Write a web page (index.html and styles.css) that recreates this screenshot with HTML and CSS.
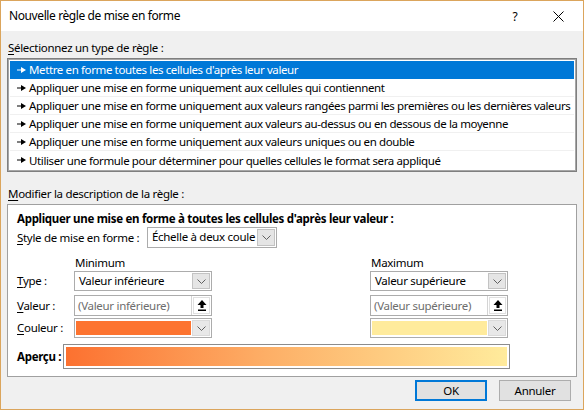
FILE: index.html
```html
<!DOCTYPE html>
<html lang="fr">
<head>
<meta charset="utf-8">
<title>Nouvelle règle de mise en forme</title>
<link rel="stylesheet" href="styles.css">
</head>
<body>
<div class="window">
  <div class="titlebar">
    <div class="title">Nouvelle règle de mise en forme</div>
    <div class="tb-help">?</div>
    <div class="tb-close"><svg width="11" height="11" viewBox="0 0 11 11"><path d="M0.5 0.5L10.5 10.5M10.5 0.5L0.5 10.5" stroke="#000" stroke-width="1"/></svg></div>
  </div>
  <div class="content">
    <div class="label"><u>S</u>électionnez un type de règle :</div>
    <div class="list">
      <div class="row selected"><svg class="arr" viewBox="0 0 9 6"><path d="M0 2.5h4.5v1H0z M4 0L9 3L4 6z" fill="currentColor"/></svg><span>Mettre en forme toutes les cellules d'après leur valeur</span></div>
      <div class="row"><svg class="arr" viewBox="0 0 9 6"><path d="M0 2.5h4.5v1H0z M4 0L9 3L4 6z" fill="currentColor"/></svg><span>Appliquer une mise en forme uniquement aux cellules qui contiennent</span></div>
      <div class="row"><svg class="arr" viewBox="0 0 9 6"><path d="M0 2.5h4.5v1H0z M4 0L9 3L4 6z" fill="currentColor"/></svg><span>Appliquer une mise en forme uniquement aux valeurs rangées parmi les premières ou les dernières valeurs</span></div>
      <div class="row"><svg class="arr" viewBox="0 0 9 6"><path d="M0 2.5h4.5v1H0z M4 0L9 3L4 6z" fill="currentColor"/></svg><span>Appliquer une mise en forme uniquement aux valeurs au-dessus ou en dessous de la moyenne</span></div>
      <div class="row"><svg class="arr" viewBox="0 0 9 6"><path d="M0 2.5h4.5v1H0z M4 0L9 3L4 6z" fill="currentColor"/></svg><span>Appliquer une mise en forme uniquement aux valeurs uniques ou en double</span></div>
      <div class="row last"><svg class="arr" viewBox="0 0 9 6"><path d="M0 2.5h4.5v1H0z M4 0L9 3L4 6z" fill="currentColor"/></svg><span>Utiliser une formule pour déterminer pour quelles cellules le format sera appliqué</span></div>
    </div>
    <div class="label label2"><u>M</u>odifier la description de la règle :</div>
    <div class="panel">
      <div class="heading">Appliquer une mise en forme à toutes les cellules d'après leur valeur :</div>
      <div class="style-row">
        <div class="style-label"><u>S</u>tyle de mise en forme :</div>
        <div class="combo style-combo">
          <span class="combo-text">Échelle à deux coule</span>
          <span class="dd"><svg width="9" height="5" viewBox="0 0 9 5"><path d="M0.5 0.5L4.5 4.5L8.5 0.5" stroke="#606060" fill="none"/></svg></span>
        </div>
      </div>
      <div class="grid">
        <div></div>
        <div class="colhead">Minimum</div>
        <div></div>
        <div class="colhead">Maximum</div>

        <div class="rlabel h20"><u>T</u>ype :</div>
        <div class="combo h20"><span class="combo-text">Valeur inférieure</span><span class="dd"><svg width="9" height="5" viewBox="0 0 9 5"><path d="M0.5 0.5L4.5 4.5L8.5 0.5" stroke="#606060" fill="none"/></svg></span></div>
        <div></div>
        <div class="combo h20"><span class="combo-text">Valeur supérieure</span><span class="dd"><svg width="9" height="5" viewBox="0 0 9 5"><path d="M0.5 0.5L4.5 4.5L8.5 0.5" stroke="#606060" fill="none"/></svg></span></div>

        <div class="rlabel h21"><u>V</u>aleur :</div>
        <div class="input h21"><span class="ph">(Valeur inférieure)</span><span class="pick"><svg width="10" height="11" viewBox="0 0 10 11"><path d="M5 0L9.5 5H6.5V8H3.5V5H0.5Z" fill="#000"/><rect x="1" y="9.5" width="8" height="1.5" fill="#000"/></svg></span></div>
        <div></div>
        <div class="input h21"><span class="ph">(Valeur supérieure)</span><span class="pick"><svg width="10" height="11" viewBox="0 0 10 11"><path d="M5 0L9.5 5H6.5V8H3.5V5H0.5Z" fill="#000"/><rect x="1" y="9.5" width="8" height="1.5" fill="#000"/></svg></span></div>

        <div class="rlabel h20"><u>C</u>ouleur :</div>
        <div class="combo color h20"><span class="swatch orange"></span><span class="dd"><svg width="9" height="5" viewBox="0 0 9 5"><path d="M0.5 0.5L4.5 4.5L8.5 0.5" stroke="#606060" fill="none"/></svg></span></div>
        <div></div>
        <div class="combo color h20"><span class="swatch yellow"></span><span class="dd"><svg width="9" height="5" viewBox="0 0 9 5"><path d="M0.5 0.5L4.5 4.5L8.5 0.5" stroke="#606060" fill="none"/></svg></span></div>
      </div>
      <div class="preview-row">
        <div class="preview-label">Aperçu :</div>
        <div class="preview"><div class="gradient"></div></div>
      </div>
    </div>
    <div class="buttons">
      <div class="btn default">OK</div>
      <div class="btn">Annuler</div>
    </div>
  </div>
</div>
</body>
</html>
```

FILE: styles.css
```css
* { box-sizing: border-box; }
html, body { margin: 0; padding: 0; }
body {
  font-family: "Noto Sans", "Open Sans", sans-serif;
  font-size: 11.5px;
  letter-spacing: -0.3px;
  color: #000;
  background: #f0f0f0;
}
u { text-decoration: underline; text-underline-offset: 2px; }

.window {
  width: 584px;
  height: 410px;
  border: 1px solid #dba55c;
  background: #f0f0f0;
  display: flex;
  flex-direction: column;
}
.titlebar {
  height: 30px;
  background: #fff;
  display: flex;
  align-items: center;
  flex-shrink: 0;
}
.title {
  flex: 1;
  padding-left: 8px;
  font-size: 12px;
  letter-spacing: -0.4px;
  line-height: 16px;
}
.tb-help {
  width: 30px;
  text-align: center;
  font-size: 12px;
  margin-right: 23px;
}
.tb-close {
  width: 14px;
  margin-right: 16px;
  display: flex;
  align-items: center;
}

.content {
  flex: 1;
  padding: 9px 6px 0 6px;
}
.label {
  line-height: 16px;
  padding-left: 1px;
  white-space: nowrap;
}
.list {
  margin-top: 2px;
  border: 1px solid #7f7f7f;
  box-shadow: inset 0 0 0 1px #a6a6a6;
  background: #fff;
  padding: 2px;
}
.row {
  height: 18px;
  display: flex;
  align-items: center;
  padding-left: 7px;
  letter-spacing: -0.38px;
  border-bottom: 1px solid #f0f0f0;
  white-space: nowrap;
  overflow: hidden;
}
.row.last { border-bottom: none; }
.row.selected {
  background: #0078d7;
  color: #fff;
  border-bottom-color: #0078d7;
}
.arr {
  width: 9px;
  height: 6px;
  margin-right: 3px;
  flex-shrink: 0;
}

.label2 { margin-top: 14px; }
.panel {
  margin-top: 2px;
  height: 173px;
  background: #fff;
  border: 1px solid #a0a0a0;
  padding: 6px 0 0 9px;
}
.heading {
  font-weight: bold;
  line-height: 16px;
  white-space: nowrap;
}
.style-row {
  display: flex;
  align-items: center;
  height: 21px;
}
.style-label { width: 130px; line-height: 16px; white-space: nowrap; }

.combo {
  height: 20px;
  border: 1px solid #acacac;
  background: #fff;
  display: flex;
  align-items: stretch;
  padding: 1px;
}
.style-combo { width: 130px; height: 21px; }
.combo-text {
  flex: 1;
  padding-left: 3px;
  line-height: 16px;
  white-space: nowrap;
  overflow: hidden;
}
.dd {
  width: 18px;
  background: #e5e5e5;
  border: 1px solid #c3c3c3;
  display: flex;
  align-items: center;
  justify-content: center;
}

.grid {
  margin-top: 7px;
  display: grid;
  grid-template-columns: 57px 138px 158px 138px;
  grid-template-rows: 16px 24px 23px 20px;
  align-items: start;
}
.colhead { line-height: 16px; padding-left: 1px; white-space: nowrap; }
.rlabel { white-space: nowrap; }
.h20 { height: 20px; }
.h21 { height: 21px; }
.rlabel.h20 { line-height: 20px; }
.rlabel.h21 { line-height: 21px; }

.input {
  border: 1px solid #acacac;
  background: #fff;
  display: flex;
  align-items: stretch;
}
.ph {
  flex: 1;
  color: #6d6d6d;
  padding-left: 3px;
  line-height: 19px;
  white-space: nowrap;
  overflow: hidden;
}
.pick {
  width: 20px;
  background: #fff;
  border-left: 1px solid #d4d4d4;
  box-shadow: inset 0 0 0 1px #fff, inset 0 0 0 2px #e0e0e0;
  display: flex;
  align-items: center;
  justify-content: center;
}

.color .swatch { flex: 1; margin: 1px 1px 1px 0; }
.swatch.orange { background: #fd7430; }
.swatch.yellow { background: #ffeb9c; }
.color .dd { border-color: #dadada; background: #e8e8e8; }

.preview-row {
  margin-top: 6px;
  display: flex;
  align-items: center;
  height: 25px;
}
.preview-label {
  width: 46px;
  font-weight: bold;
  line-height: 16px;
  white-space: nowrap;
}
.preview {
  width: 447px;
  height: 25px;
  border: 1px solid #8c8c8c;
  background: #fff;
  padding: 2px;
}
.gradient {
  width: 100%;
  height: 100%;
  background: linear-gradient(to right, #fc7130 0%, #fdae66 45%, #ffeb9c 100%);
}

.buttons {
  display: flex;
  justify-content: flex-end;
  gap: 12px;
  margin-top: 3px;
  padding-right: 6px;
}
.btn {
  width: 72px;
  height: 21px;
  border: 1px solid #adadad;
  background: #e1e1e1;
  text-align: center;
  line-height: 19px;
}
.btn.default {
  border: 2px solid #0078d7;
  line-height: 17px;
}
```
